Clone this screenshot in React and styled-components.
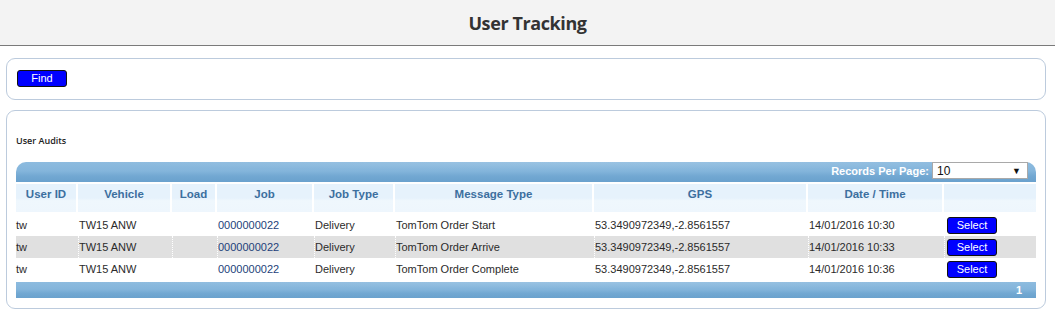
import React from 'react'
import styled, { createGlobalStyle } from 'styled-components'

const GlobalStyle = createGlobalStyle`
  body {
    margin: 0;
    background: #fff;
    font-family: "Liberation Sans", Arial, sans-serif;
  }
`

const columns = [
  { key: 'user', label: 'User ID', width: 62 },
  { key: 'vehicle', label: 'Vehicle', width: 94 },
  { key: 'load', label: 'Load', width: 45 },
  { key: 'job', label: 'Job', width: 97 },
  { key: 'jobType', label: 'Job Type', width: 81 },
  { key: 'message', label: 'Message Type', width: 199 },
  { key: 'gps', label: 'GPS', width: 214 },
  { key: 'date', label: 'Date / Time', width: 136 },
  { key: 'action', label: '', width: 92 },
]

const rows = [
  { user: 'tw', vehicle: 'TW15 ANW', load: '', job: '0000000022', jobType: 'Delivery', message: 'TomTom Order Start', gps: '53.3490972349,-2.8561557', date: '14/01/2016 10:30' },
  { user: 'tw', vehicle: 'TW15 ANW', load: '', job: '0000000022', jobType: 'Delivery', message: 'TomTom Order Arrive', gps: '53.3490972349,-2.8561557', date: '14/01/2016 10:33' },
  { user: 'tw', vehicle: 'TW15 ANW', load: '', job: '0000000022', jobType: 'Delivery', message: 'TomTom Order Complete', gps: '53.3490972349,-2.8561557', date: '14/01/2016 10:36' },
]

const App = () => {
  return (
    <>
      <GlobalStyle />
      <Header>
        <Title>User Tracking</Title>
      </Header>
      <Panel $pad="11px 10px 12px">
        <BlueButton $w={50}>Find</BlueButton>
      </Panel>
      <Panel $pad="23px 9px 10px" $mt={10}>
        <SectionLabel>User Audits</SectionLabel>
        <Grid>
          <TopBar>
            <PagerLabel>Records Per Page:</PagerLabel>
            <PageSelect>
              <span>10</span>
              <Arrow>▼</Arrow>
            </PageSelect>
          </TopBar>
          <HeadRow>
            {columns.map((c) => (
              <HeadCell key={c.key} $w={c.width}>{c.label}</HeadCell>
            ))}
          </HeadRow>
          {rows.map((r, i) => (
            <Row key={i} $alt={i % 2 === 1}>
              {columns.map((c) => (
                <Cell key={c.key} $w={c.width} $alt={i % 2 === 1} $link={c.key === 'job'}>
                  {c.key === 'action' ? <BlueButton $w={50}>Select</BlueButton> : r[c.key]}
                </Cell>
              ))}
            </Row>
          ))}
          <BottomBar>1</BottomBar>
        </Grid>
      </Panel>
    </>
  )
}

const Header = styled.header`
  height: 45px;
  background: #f3f3f3;
  border-bottom: 1px solid #7a7a7a;
  display: flex;
  align-items: center;
  justify-content: center;
  margin-bottom: 12px;
`

const Title = styled.h1`
  margin: 0;
  font-family: "Open Sans", sans-serif;
  font-size: 18px;
  font-weight: 700;
  color: #333;
  letter-spacing: -0.4px;
  padding-top: 1px;
`

const Panel = styled.section`
  margin: ${({ $mt }) => $mt || 0}px 9px 0 6px;
  border: 1px solid #bccbdd;
  border-radius: 9px;
  padding: ${({ $pad }) => $pad};
`

const BlueButton = styled.button`
  width: ${({ $w }) => $w}px;
  height: 17px;
  padding: 0;
  background: #0000ff;
  color: #fff;
  border: 1px solid #111;
  border-radius: 3px;
  font-family: "Liberation Sans", Arial, sans-serif;
  font-size: 11px;
  line-height: 15px;
  display: block;
`

const SectionLabel = styled.div`
  font-family: "Open Sans", sans-serif;
  font-size: 9px;
  font-weight: 600;
  color: #222;
  height: 13px;
  margin-bottom: 15px;
`

const Grid = styled.div`
  width: 1020px;
`

const TopBar = styled.div`
  height: 20px;
  border-radius: 10px 10px 0 0;
  background:
    radial-gradient(ellipse 70% 60% at 55% 0%, rgba(255,255,255,0.12), rgba(255,255,255,0) 70%),
    linear-gradient(to bottom, #8dbbdf 0%, #84b5db 45%, #72a8d2 70%, #6aa1cd 100%);
  display: flex;
  justify-content: flex-end;
  align-items: flex-start;
  padding-right: 8px;
  margin-bottom: 2px;
`

const PagerLabel = styled.span`
  color: #fff;
  font-weight: bold;
  font-size: 11px;
  line-height: 18px;
  margin-right: 3px;
`

const PageSelect = styled.div`
  width: 84px;
  height: 15px;
  background: #fff;
  border: 1px solid #a9a9a9;
  display: flex;
  justify-content: space-between;
  align-items: center;
  padding: 0 6px 0 4px;
  font-size: 12px;
  color: #111;
  box-sizing: content-box;
`

const Arrow = styled.span`
  font-size: 9px;
`

const HeadRow = styled.div`
  display: flex;
  height: 28px;
  margin-bottom: 2px;
`

const HeadCell = styled.div`
  width: ${({ $w }) => $w}px;
  box-sizing: border-box;
  border-right: 2px solid #fff;
  background: linear-gradient(to bottom, #e6f2fc 0%, #e6f2fc 50%, #eff7fd 60%, #eef6fd 100%);
  color: #3c6f9f;
  font-weight: bold;
  font-size: 11.5px;
  text-align: center;
  padding-top: 4px;
  &:last-child { border-right: none; }
`

const Row = styled.div`
  display: flex;
  height: 22px;
  background: ${({ $alt }) => ($alt ? '#e0e0e0' : '#fff')};
`

const Cell = styled.div`
  width: ${({ $w }) => $w}px;
  box-sizing: border-box;
  padding-left: 0;
  display: flex;
  align-items: center;
  font-size: 11px;
  color: ${({ $link }) => ($link ? '#1d3f7a' : '#2b2b2b')};
  border-left: ${({ $alt }) => ($alt ? '1px dotted #fff' : '1px solid transparent')};
  &:first-child { border-left: none; padding-left: 0; }
  &:last-child { padding-left: 2px; }
`

const BottomBar = styled.div`
  margin-top: 2px;
  height: 16px;
  background:
    radial-gradient(ellipse 70% 60% at 55% 0%, rgba(255,255,255,0.12), rgba(255,255,255,0) 70%),
    linear-gradient(to bottom, #8dbbdf 0%, #84b5db 45%, #72a8d2 70%, #6aa1cd 100%);
  color: #fff;
  font-weight: bold;
  font-size: 11px;
  line-height: 16px;
  text-align: right;
  padding-right: 14px;
`

export default App
